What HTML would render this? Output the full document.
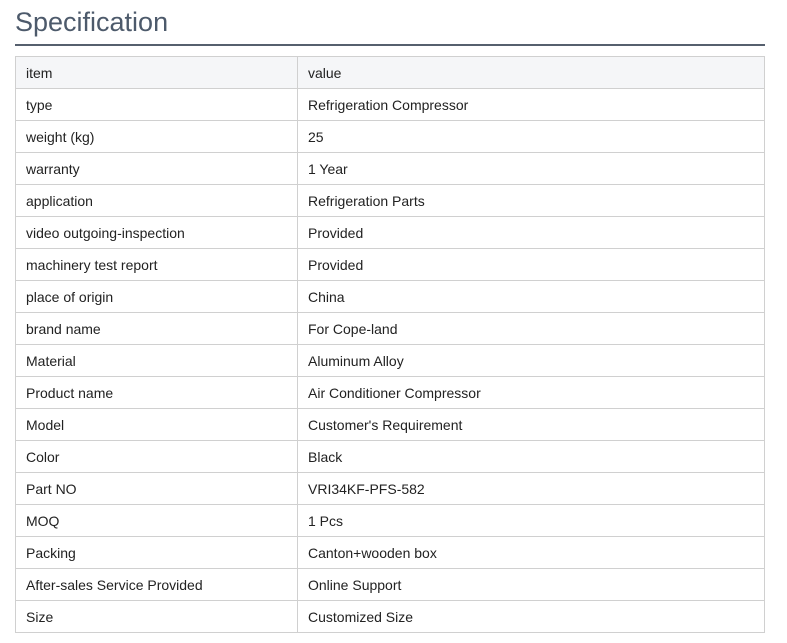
<!DOCTYPE html>
<html><head><meta charset="utf-8"><style>
body{margin:0;background:#fff;font-family:"Liberation Sans",Arial,sans-serif;}
h2{position:absolute;left:15px;top:5px;margin:0;font-weight:normal;font-size:27px;color:#4d5a6b;line-height:34px;}
.ul{position:absolute;left:15px;top:44px;width:750px;height:2px;background:#56606e;}
table{position:absolute;left:15px;top:56px;width:750px;border-collapse:collapse;font-size:14px;color:#222;}
td{border:1px solid #d0d0d0;height:32px;padding:0 0 0 10px;box-sizing:border-box;}
td:first-child{width:282px;}
tr:first-child td{background:#f5f6f8;}
</style></head><body>
<h2>Specification</h2><div class="ul"></div>
<table>
<tr><td>item</td><td>value</td></tr>
<tr><td>type</td><td>Refrigeration Compressor</td></tr>
<tr><td>weight (kg)</td><td>25</td></tr>
<tr><td>warranty</td><td>1 Year</td></tr>
<tr><td>application</td><td>Refrigeration Parts</td></tr>
<tr><td>video outgoing-inspection</td><td>Provided</td></tr>
<tr><td>machinery test report</td><td>Provided</td></tr>
<tr><td>place of origin</td><td>China</td></tr>
<tr><td>brand name</td><td>For Cope-land</td></tr>
<tr><td>Material</td><td>Aluminum Alloy</td></tr>
<tr><td>Product name</td><td>Air Conditioner Compressor</td></tr>
<tr><td>Model</td><td>Customer's Requirement</td></tr>
<tr><td>Color</td><td>Black</td></tr>
<tr><td>Part NO</td><td>VRI34KF-PFS-582</td></tr>
<tr><td>MOQ</td><td>1 Pcs</td></tr>
<tr><td>Packing</td><td>Canton+wooden box</td></tr>
<tr><td>After-sales Service Provided</td><td>Online Support</td></tr>
<tr><td>Size</td><td>Customized Size</td></tr>
</table>
</body></html>
